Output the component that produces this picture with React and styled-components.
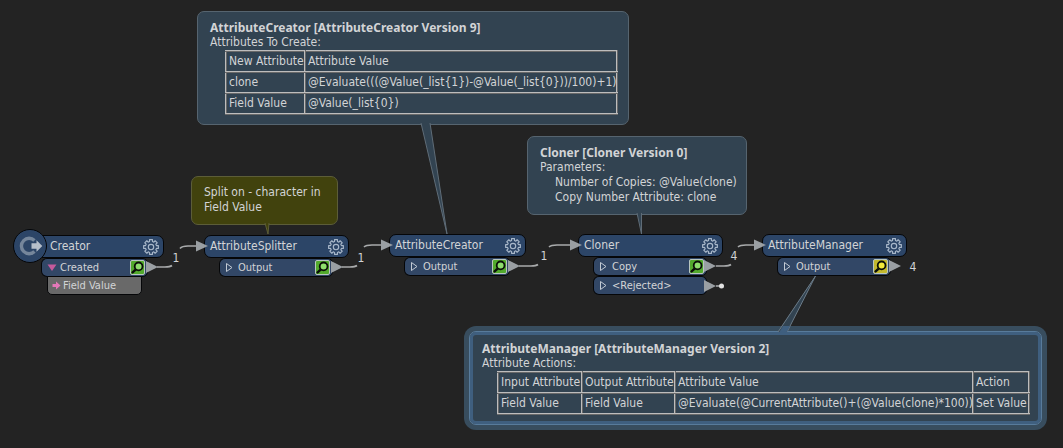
import React from "react";
import styled, { createGlobalStyle } from "styled-components";

const GlobalStyle = createGlobalStyle`
  * { box-sizing: border-box; }
  body {
    margin: 0;
    background: #232323;
    color: #d2d4d6;
    font-family: "DejaVu Sans Condensed", "Noto Sans", sans-serif;
    font-size: 12px;
    line-height: 15px;
  }
  button { font: inherit; color: inherit; background: none; border: 0; padding: 0; }
`;

const Canvas = styled.main`
  position: relative;
  width: 100%;
  min-height: 100vh;
  overflow: hidden;
`;

const Wires = styled.svg`
  position: absolute;
  inset: 0;
  width: 100%;
  height: 100%;
  pointer-events: none;
`;

/* ---------- notes ---------- */

const Note = styled.section`
  position: absolute;
  left: ${(p) => p.$x}px;
  top: ${(p) => p.$y}px;
  width: ${(p) => p.$w}px;
  padding: 8px 12px 9px;
  border: 1px solid ${(p) => (p.$kind === "user" ? "#5c5d38" : "#56646f")};
  border-radius: 7px;
  background: ${(p) => (p.$kind === "user" ? "#41420d" : "#324351")};
`;

const SelectedNote = styled(Note)`
  padding: 9px 12px;
  border: 1px solid #587b9b;
  box-shadow: inset 0 0 0 3px #3f5f7f, 0 0 0 5px #384d5e;
`;

const NoteTitle = styled.h2`
  margin: 0;
  font-family: "Noto Sans", sans-serif;
  font-size: 12px;
  line-height: 15px;
  font-weight: 700;
  white-space: nowrap;
`;

const NoteText = styled.p`
  margin: 0;
  padding-left: ${(p) => (p.$indent ? 15 : 0)}px;
  white-space: ${(p) => (p.$wrap ? "normal" : "nowrap")};
`;

const DataTable = styled.table`
  margin-left: 15px;
  border-collapse: collapse;
  table-layout: fixed;
  width: ${(p) => p.$w}px;
`;

const Cell = styled.td`
  height: 21px;
  padding: 0 0 0 2px;
  border: 2px ridge #bdbdbd;
  text-align: left;
  font-weight: 400;
  line-height: 15px;
  white-space: nowrap;
`;

/* ---------- transformers ---------- */

const Node = styled.article`
  position: absolute;
  left: ${(p) => p.$x}px;
  top: ${(p) => p.$y}px;
  width: ${(p) => p.$w}px;
  font-size: 11px;
`;

const Header = styled.header`
  display: flex;
  align-items: center;
  justify-content: space-between;
  height: 23px;
  padding: 0 3px 0 ${(p) => (p.$source ? 23 : 5)}px;
  border: 1px solid #050608;
  border-radius: 7px;
  background: #2c4567;
`;

const NodeTitle = styled.h3`
  margin: 0;
  font-size: 12px;
  line-height: 17px;
  font-weight: 400;
`;

const IconButton = styled.button`
  display: flex;
  flex: none;
`;

const Port = styled.div`
  display: flex;
  align-items: center;
  height: 19px;
  margin: 0 15px;
  padding: 0 3px 0 5px;
  border: 1px solid #050608;
  border-radius: 6px 6px 6px 6px / 6px 9px 9px 6px;
  background: #324766;
`;

const PortToggle = styled.button`
  display: flex;
  flex: 1;
  align-items: center;
  gap: 3px;
`;

const Inspect = styled.button`
  display: flex;
  border: 1px solid #b9c6c0;
  border-radius: 2px;
  background: ${(p) => (p.$stale ? "#c3b92d" : "#52aa2c")};
`;

const AttributeRow = styled.div`
  display: flex;
  align-items: center;
  gap: 2px;
  height: 19px;
  margin: -1px 22px 0 21px;
  padding-left: 4px;
  border: 1px solid #050608;
  border-radius: 0 0 5px 5px;
  background: #696969;
`;

const SourceBadge = styled.div`
  position: absolute;
  left: -13px;
  top: -6px;
  display: flex;
  align-items: center;
  justify-content: center;
  width: 34px;
  height: 34px;
  border: 1px solid #050608;
  border-radius: 50%;
  background: #2c4567;
`;

const Count = styled.text`
  fill: #d2d4d6;
  font-size: 12px;
  text-anchor: middle;
`;

function gearPath() {
  const pts = [];
  const teeth = 8;
  const at = (r, a) => `${(9 + r * Math.cos(a)).toFixed(2)} ${(9 + r * Math.sin(a)).toFixed(2)}`;
  for (let i = 0; i < teeth; i++) {
    const c = (i * 2 * Math.PI) / teeth;
    pts.push(at(5.6, c - 0.26), at(7.5, c - 0.2), at(7.5, c + 0.2), at(5.6, c + 0.26));
  }
  return `M${pts.join("L")}Z`;
}

const Gear = () => (
  <svg width="18" height="18" viewBox="0 0 18 18" fill="none" stroke="#a9b8ca" strokeWidth="1.15" strokeLinejoin="round">
    <path d={gearPath()} />
    <circle cx="9" cy="9" r="2.7" />
  </svg>
);

const Magnifier = ({ stale }) => (
  <svg width="13" height="13" viewBox="0 0 13 13">
    <path d="M5.2 8.2L1.6 11.4" stroke="#0b0f08" strokeWidth="2.4" strokeLinecap="round" />
    <circle cx="7.6" cy="5.4" r="3.9" fill={stale ? "#f3ea3a" : "#8ede6c"} stroke="#0b0f08" strokeWidth="1.8" />
  </svg>
);

const Expander = ({ open }) => (
  <svg width="10" height="11" viewBox="0 0 10 11">
    {open ? (
      <path d="M0.5 2.5H9.5L5 9Z" fill="#c45a9c" />
    ) : (
      <path d="M1.5 1.5V9.5L7 5.5Z" fill="none" stroke="#c2cad4" />
    )}
  </svg>
);

function PortRow({ label, open, stale, inspect = true }) {
  return (
    <Port>
      <PortToggle type="button" aria-expanded={!!open}>
        <Expander open={open} />
        {label}
      </PortToggle>
      {inspect && (
        <Inspect type="button" $stale={stale} aria-label={`Inspect ${label}`}>
          <Magnifier stale={stale} />
        </Inspect>
      )}
    </Port>
  );
}

function Transformer({ x, y, w, title, source, children }) {
  return (
    <Node $x={x} $y={y} $w={w}>
      <Header $source={source}>
        <NodeTitle>{title}</NodeTitle>
        <IconButton type="button" aria-label={`${title} parameters`}>
          <Gear />
        </IconButton>
      </Header>
      {source && (
        <SourceBadge>
          <svg width="26" height="22" viewBox="0 0 26 22">
            <path d="M17.5 5.5A7.7 7.7 0 1 0 17.5 16.5" fill="none" stroke="#75869b" strokeWidth="3.4" />
            <path d="M14.5 8.2H19.5V5.2L25.3 11L19.5 16.8V13.8H14.5Z" fill="#b6bfca" />
          </svg>
        </SourceBadge>
      )}
      {children}
    </Node>
  );
}

function Grid({ widths, rows }) {
  return (
    <DataTable $w={widths.reduce((a, b) => a + b, 0)}>
      <colgroup>
        {widths.map((w, i) => (
          <col key={i} width={w} />
        ))}
      </colgroup>
      <tbody>
        {rows.map((row, r) => (
          <tr key={r}>
            {row.map((text, c) => (
              <Cell key={c} as={r === 0 ? "th" : "td"}>
                {text}
              </Cell>
            ))}
          </tr>
        ))}
      </tbody>
    </DataTable>
  );
}

const inputs = [[196, 246], [381, 245], [570, 245], [754, 245]];
const outputs = [[146, 267], [331, 267], [508, 266], [704, 266], [704, 286], [889, 266]];
const counts = [[176, 262, 1], [361, 262, 1], [544, 260, 1], [734, 260, 4], [913, 271, 4]];

const links = [
  "M157 267H165Q170 267 172 265.5M180 248.5Q182 246 188 246H197",
  "M342 267H350Q355 267 357 265.5M364 247Q366 245 372 245H382",
  "M519 266H531Q536 266 538 264.5M549 247Q551 245 557 245H571",
  "M716 266H724Q729 266 731 264.5M738 247Q740 245 746 245H755",
  "M716 286H721",
];

export default function App() {
  return (
    <>
      <GlobalStyle />
      <Canvas>
        <Note $x={197} $y={11} $w={432}>
          <NoteTitle>AttributeCreator [AttributeCreator Version 9]</NoteTitle>
          <NoteText>Attributes To Create:</NoteText>
          <Grid
            widths={[79, 312]}
            rows={[
              ["New Attribute", "Attribute Value"],
              ["clone", "@Evaluate(((@Value(_list{1})-@Value(_list{0}))/100)+1)"],
              ["Field Value", "@Value(_list{0})"],
            ]}
          />
        </Note>

        <Note $x={191} $y={176} $w={147} $kind="user">
          <NoteText $wrap>Split on - character in Field Value</NoteText>
        </Note>

        <Note $x={527} $y={136} $w={220}>
          <NoteTitle>Cloner [Cloner Version 0]</NoteTitle>
          <NoteText>Parameters:</NoteText>
          <NoteText $indent>Number of Copies: @Value(clone)</NoteText>
          <NoteText $indent>Copy Number Attribute: clone</NoteText>
        </Note>

        <SelectedNote $x={469} $y={331} $w={573}>
          <NoteTitle>AttributeManager [AttributeManager Version 2]</NoteTitle>
          <NoteText>Attribute Actions:</NoteText>
          <Grid
            widths={[84, 93, 298, 56]}
            rows={[
              ["Input Attribute", "Output Attribute", "Attribute Value", "Action"],
              ["Field Value", "Field Value", "@Evaluate(@CurrentAttribute()+(@Value(clone)*100))", "Set Value"],
            ]}
          />
        </SelectedNote>

        <Wires strokeLinejoin="round">
          <path d="M421 123L447 234L430 123" fill="#324351" stroke="#5f6c77" />
          <path d="M265 223L268 234L269 223" fill="#41420d" stroke="#5c5d38" />
          <path d="M637 213L641.5 234L641.5 213" fill="#324351" stroke="#5f6c77" />
          <path d="M778 332L815.5 276L787 332" fill="#324351" stroke="#6b7b88" />
          <path d="M779 332.5L783 326H790L786.5 332.5Z" fill="#3f5f7f" />
        </Wires>

        <Transformer x={26} y={235} w={138} title="Creator" source>
          <PortRow label="Created" open />
          <AttributeRow>
            <svg width="9" height="9" viewBox="0 0 9 9">
              <path d="M0.5 3H4V0.5L8.5 4.5L4 8.5V6H0.5Z" fill="#e478b8" />
            </svg>
            Field Value
          </AttributeRow>
        </Transformer>
        <Transformer x={204} y={235} w={145} title="AttributeSplitter">
          <PortRow label="Output" />
        </Transformer>
        <Transformer x={389} y={234} w={137} title="AttributeCreator">
          <PortRow label="Output" />
        </Transformer>
        <Transformer x={578} y={234} w={145} title="Cloner">
          <PortRow label="Copy" />
          <PortRow label="<Rejected>" inspect={false} />
        </Transformer>
        <Transformer x={762} y={234} w={145} title="AttributeManager">
          <PortRow label="Output" stale />
        </Transformer>

        <Wires>
          {links.map((d) => (
            <path key={d} d={d} fill="none" stroke="#a9abac" strokeWidth="1.6" />
          ))}
          {inputs.map(([x, y]) => (
            <path key={x} d={`M${x} ${y - 5.5}L${x + 12} ${y}L${x} ${y + 5.5}Z`} fill="#9a9fa3" />
          ))}
          {outputs.map(([x, y]) => (
            <path key={`${x}-${y}`} d={`M${x} ${y - 6}L${x + 12} ${y}L${x} ${y + 6}Z`} fill="#9a9fa3" />
          ))}
          <circle cx="721.5" cy="286" r="2.5" fill="#e2e2e2" />
          {counts.map(([x, y, n]) => (
            <Count key={x} x={x} y={y}>
              {n}
            </Count>
          ))}
        </Wires>
      </Canvas>
    </>
  );
}
